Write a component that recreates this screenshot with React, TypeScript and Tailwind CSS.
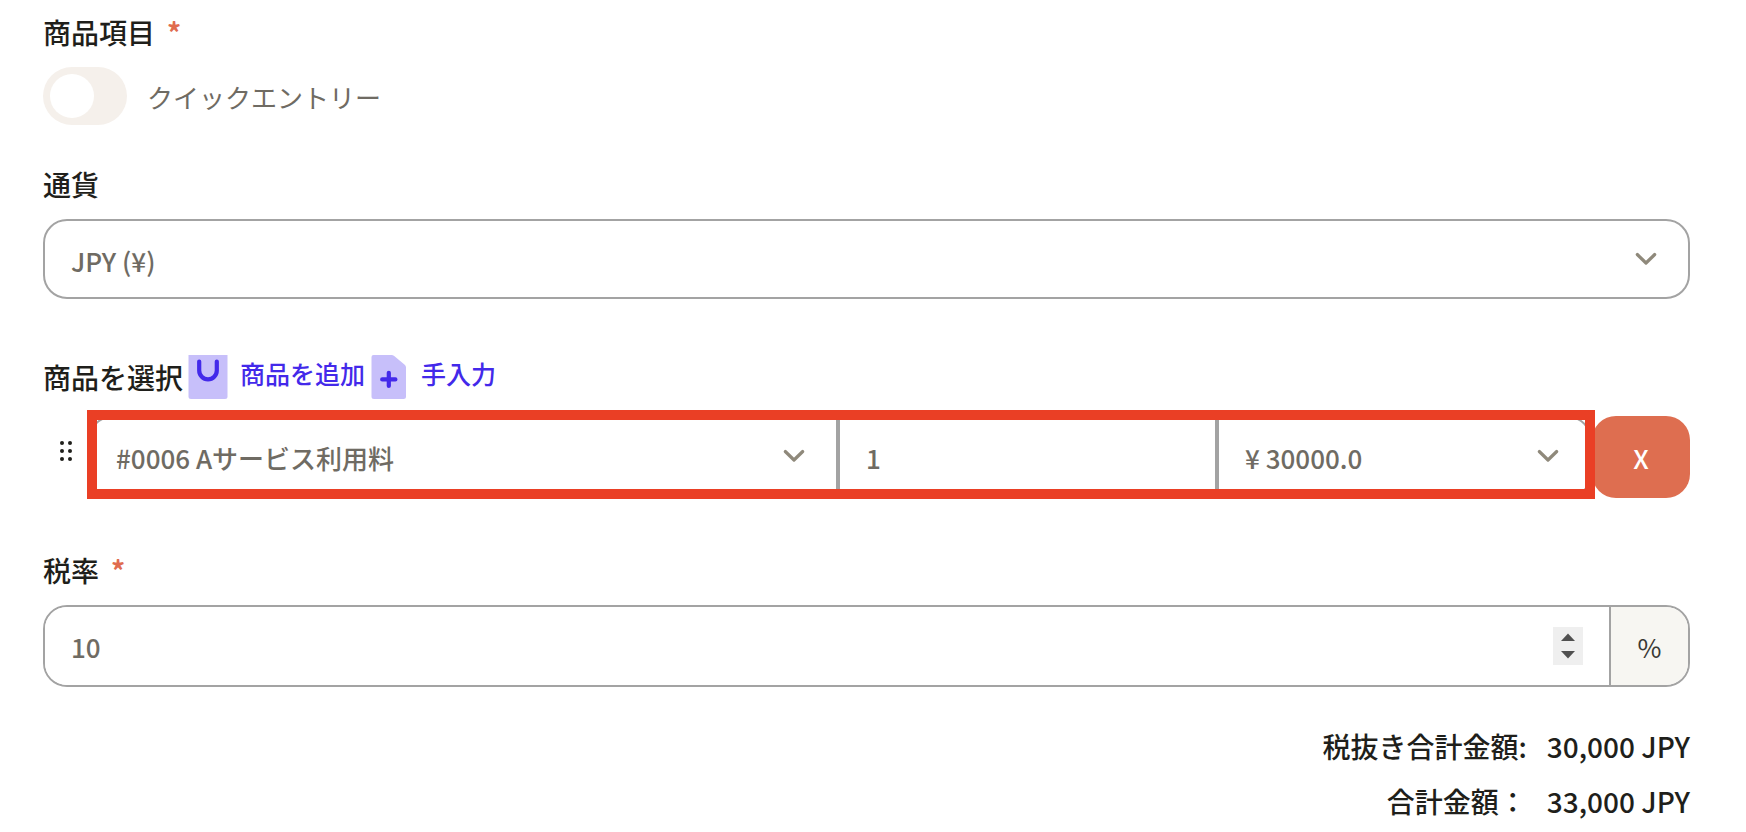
import React, { useState } from 'react';

interface ChevronProps {
  className?: string;
}

const Chevron: React.FC<ChevronProps> = ({ className }) => (
  <svg className={`pointer-events-none absolute top-8 h-4 w-6 text-[#8f897b] ${className ?? ''}`} fill="none" stroke="currentColor" viewBox="0 0 24 16">
    <path strokeLinecap="round" strokeLinejoin="round" strokeWidth="3.2" d="M3.3 3.5L12 12L20.7 3.5" />
  </svg>
);

const Required = () => <span className="ml-3 font-bold text-[#e06c4f]">*</span>;

const BagIcon = () => (
  <svg className="h-11 w-10 shrink-0" viewBox="0 0 40 44" fill="none">
    <path d="M0.5 0H39.5V41.5Q39.5 44 37 44H3Q0.5 44 0.5 41.5Z" fill="#c7bffa" />
    <path d="M11.2 6.5V15.5a8.8 8.8 0 0 0 17.6 0V6.5" stroke="#4329ea" strokeWidth="4.2" strokeLinecap="round" />
  </svg>
);

const FilePlusIcon = () => (
  <svg className="h-11 w-9 shrink-0" viewBox="0 0 36 44" fill="none">
    <path d="M0.5 2Q0.5 0 2.5 0H20.5Q22 0 23.2 1L34 10Q35 11 35 12.5V41.5Q35 44 32.5 44H3Q0.5 44 0.5 41.5Z" fill="#c7bffa" />
    <path d="M17.8 17.8v13.2M11.2 24.4h13.2" stroke="#4329ea" strokeWidth="4.2" strokeLinecap="round" />
  </svg>
);

const App: React.FC = () => {
  const [quickEntry, setQuickEntry] = useState(false);
  const [quantity, setQuantity] = useState('1');
  const [taxRate, setTaxRate] = useState(10);

  return (
    <div className="bg-white pt-3 pr-14 pl-[43px] font-['Noto_Sans_CJK_JP',sans-serif] text-[28px] leading-10 font-medium text-[#1f1f1b]">
      <h2>商品項目<Required /></h2>
      <label className="mt-[15px] flex items-center gap-5">
        <input
          type="checkbox"
          role="switch"
          checked={quickEntry}
          onChange={e => setQuickEntry(e.target.checked)}
          className="h-[58px] w-[84px] appearance-none rounded-full bg-[#f5f0eb] p-[7px] before:block before:size-11 before:rounded-full before:bg-white checked:bg-[#4329ea] checked:before:ml-[26px]"
        />
        <span className="pt-0.5 text-[26px] font-normal text-[#6f6b63]">クイックエントリー</span>
      </label>

      <label htmlFor="currency" className="mt-[39px] block">通貨</label>
      <div className="relative mt-[15px]">
        <select id="currency" className="block h-20 w-full appearance-none rounded-3xl border-2 border-[#a3a3a3] bg-white px-[26px] pt-1 text-[26px] text-[#6f6b63]">
          <option>JPY (¥)</option>
        </select>
        <Chevron className="right-8" />
      </div>

      <div className="mt-14 flex h-11 items-center">
        <span>商品を選択</span>
        <a href="#add" className="ml-[5px] flex items-center gap-3 text-[25px] text-[#4329ea]">
          <BagIcon />
          <span className="pb-2">商品を追加</span>
        </a>
        <a href="#manual" className="ml-[6px] flex items-center gap-3.5 text-[25px] text-[#4329ea]">
          <FilePlusIcon />
          <span className="pb-2">手入力</span>
        </a>
      </div>

      <div className="mt-[17px] flex">
        <button type="button" aria-label="並べ替え" className="flex w-[45px] shrink-0 justify-center pt-6">
          <svg className="h-6 w-4" viewBox="0 0 16 24" fill="currentColor">
            <circle cx="4" cy="3" r="2" /><circle cx="12" cy="3" r="2" />
            <circle cx="4" cy="11" r="2" /><circle cx="12" cy="11" r="2" />
            <circle cx="4" cy="19" r="2" /><circle cx="12" cy="19" r="2" />
          </svg>
        </button>
        <div className="relative grid flex-1 grid-cols-[750fr_379fr_375fr] text-[26px] text-[#6f6b63]">
          <div className="relative">
            <select aria-label="商品" className="block h-[82px] w-full appearance-none rounded-l-3xl border-2 border-[#a3a3a3] bg-white px-[26px] pt-0.5">
              <option>#0006 Aサービス利用料</option>
            </select>
            <Chevron className="right-8" />
          </div>
          <input
            aria-label="数量"
            value={quantity}
            onChange={e => setQuantity(e.target.value)}
            className="h-[82px] w-full border-2 border-[#a3a3a3] bg-white px-[26px]"
          />
          <div className="relative">
            <select aria-label="単価" className="block h-[82px] w-full appearance-none rounded-r-3xl border-2 border-[#a3a3a3] bg-white px-[26px] pt-0.5">
              <option>¥ 30000.0</option>
            </select>
            <Chevron className="right-8" />
          </div>
          {/* highlight frame around the line item */}
          <div className="pointer-events-none absolute -top-1.5 -right-[3px] -bottom-px -left-px z-10 border-10 border-[#ea3f25]" />
        </div>
        <button type="button" className="h-[82px] w-[98px] shrink-0 rounded-3xl bg-[#de6e50] pt-0.5 text-[26px] text-white">X</button>
      </div>

      <label htmlFor="tax" className="mt-[52px] block">税率<Required /></label>
      <div className="mt-[15px] flex h-[82px] overflow-hidden rounded-3xl border-2 border-[#a3a3a3] text-[26px]">
        <input
          id="tax"
          type="number"
          value={taxRate}
          onChange={e => setTaxRate(Number(e.target.value))}
          className="min-w-0 flex-1 bg-white pt-0.5 pl-[26px] text-[#6f6b63] [appearance:textfield] [&::-webkit-inner-spin-button]:appearance-none"
        />
        <div className="mr-[26px] flex h-[38px] w-[30px] flex-col self-center bg-[#efefef] text-[#505050]">
          <button type="button" aria-label="増やす" onClick={() => setTaxRate(taxRate + 1)} className="flex flex-1 items-end justify-center pb-1">
            <svg className="h-2 w-3.5" viewBox="0 0 14 8" fill="currentColor"><path d="M7 0.5L14 8H0z" /></svg>
          </button>
          <button type="button" aria-label="減らす" onClick={() => setTaxRate(taxRate - 1)} className="flex flex-1 items-start justify-center pt-1.5">
            <svg className="h-2 w-3.5" viewBox="0 0 14 8" fill="currentColor"><path d="M0 0H14L7 7.5z" /></svg>
          </button>
        </div>
        <span className="flex w-[79px] items-center justify-center border-l-2 border-[#a3a3a3] bg-[#f7f6f2] pt-0.5 font-normal text-[#3a3935]">%</span>
      </div>

      <dl className="mt-[39px] grid grid-cols-[1fr_auto] gap-x-5 gap-y-[15px] text-right">
        <dt>税抜き合計金額:</dt>
        <dd>30,000 JPY</dd>
        <dt>合計金額：</dt>
        <dd>33,000 JPY</dd>
      </dl>
    </div>
  );
};

export default App;
